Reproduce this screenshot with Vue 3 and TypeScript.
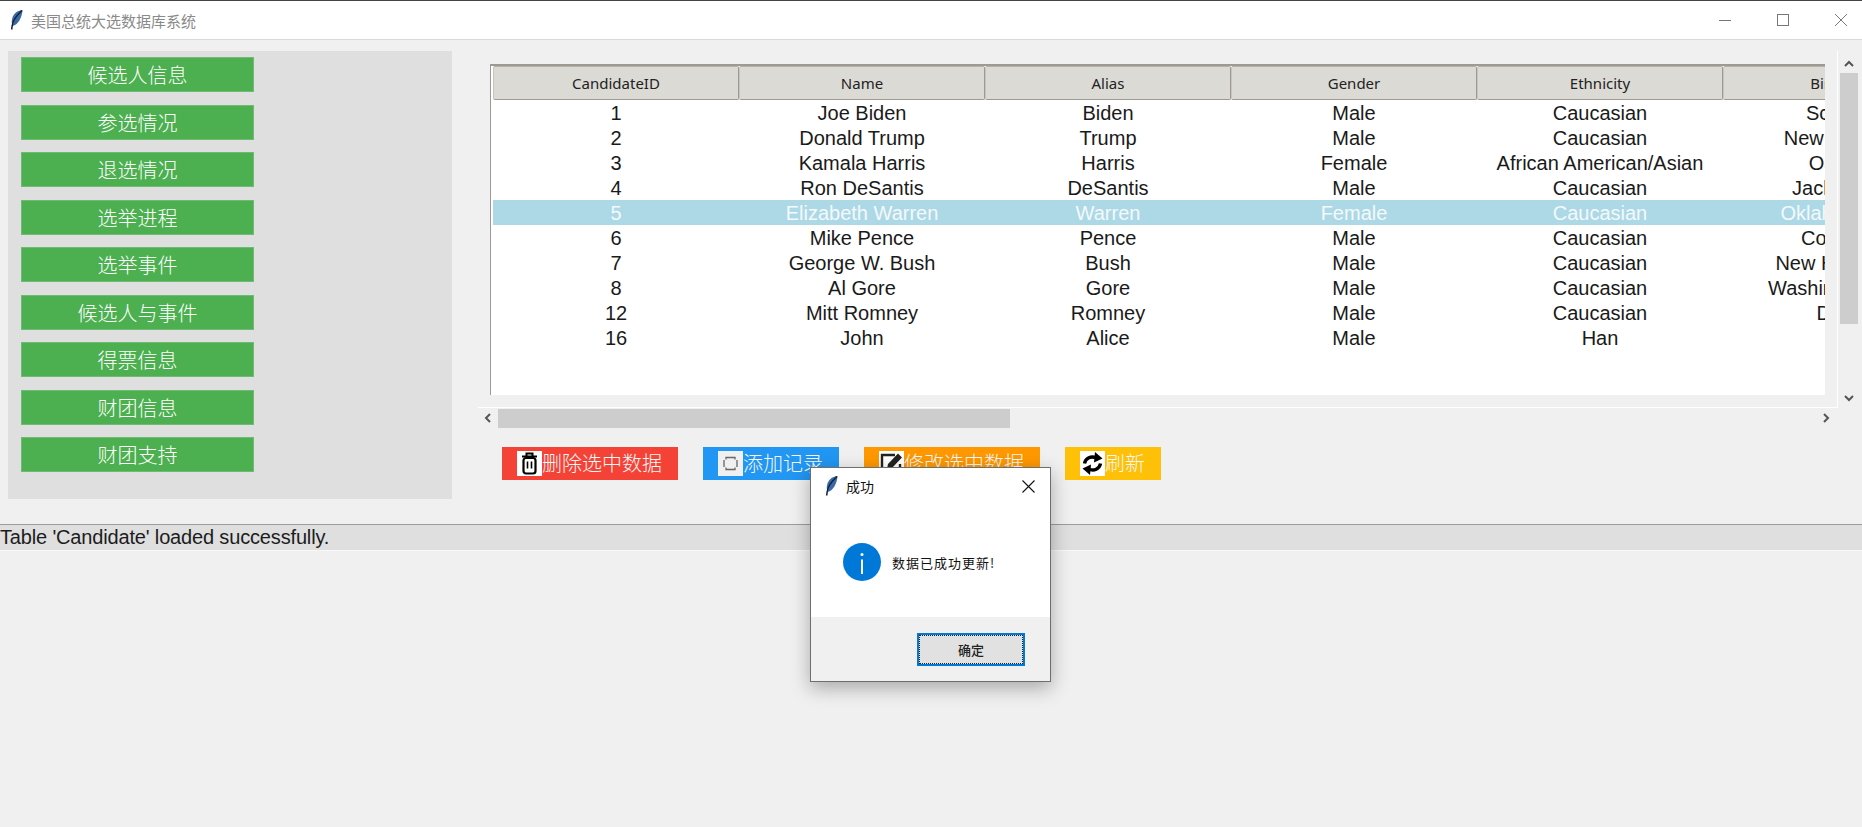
<template>
  <div class="window">
    <div class="titlebar">
      <svg class="feather" width="15" height="22" viewBox="0 0 15 22">
        <path d="M13.500 1C8 1.500 3.500 5 2.800 11.500c-.2 2 .2 4 .9 5.500 5-1 9.300-8 9.800-16z" fill="#3a6aa6" />
        <path d="M13 1.500C8 6 3.500 11 3.200 17l-.6 3.500" fill="none" stroke="#142338" stroke-width="1.500" />
      </svg>
      <span class="app-title">美国总统大选数据库系统</span>
      <div class="win-controls">
        <svg width="12" height="12" viewBox="0 0 12 12"><path d="M0 6.500h12" stroke="#777" /></svg>
        <svg width="12" height="12" viewBox="0 0 12 12"><rect x=".5" y=".5" width="11" height="11" fill="none" stroke="#777" /></svg>
        <svg width="12" height="12" viewBox="0 0 12 12"><path d="M0 0l12 12M12 0L0 12" stroke="#777" /></svg>
      </div>
    </div>

    <div class="main">
      <div class="side">
        <button v-for="item in menu" :key="item" class="side-btn">{{ item }}</button>
      </div>

      <div class="content">
        <div class="table-row">
          <div class="frame">
            <div class="tree">
              <div class="tree-head">
                <div v-for="c in columns" :key="c" class="head-cell">{{ c }}</div>
              </div>
              <div
                v-for="row in rows"
                :key="row[0]"
                :class="['tree-row', { selected: row[0] === '5' }]"
              >
                <div v-for="(val, i) in row" :key="i" class="cell">{{ val }}</div>
              </div>
            </div>
          </div>
          <div class="vscroll">
            <svg class="arrow" width="10" height="7" viewBox="0 0 10 7"><path d="M1 6l4-4 4 4" fill="none" stroke="#555" stroke-width="2" /></svg>
            <div class="vthumb"></div>
            <svg class="arrow" width="10" height="7" viewBox="0 0 10 7"><path d="M1 1l4 4 4-4" fill="none" stroke="#555" stroke-width="2" /></svg>
          </div>
        </div>

        <div class="hscroll">
          <svg width="7" height="10" viewBox="0 0 7 10"><path d="M6 1L2 5l4 4" fill="none" stroke="#555" stroke-width="2" /></svg>
          <div class="hthumb"></div>
          <svg class="arrow-right" width="7" height="10" viewBox="0 0 7 10"><path d="M1 1l4 4-4 4" fill="none" stroke="#555" stroke-width="2" /></svg>
        </div>

        <div class="actions">
          <button v-for="a in actions" :key="a.label" class="action-btn" :style="{ background: a.color }">
            <span :class="['icon-box', a.icon]">
              <svg v-if="a.icon === 'trash'" width="25" height="25" viewBox="0 0 25 25">
                <path d="M5 5.500h15M9.500 5V2.500h6V5" fill="none" stroke="#000" stroke-width="2" />
                <rect x="6.500" y="7" width="12" height="15.500" rx="2.500" fill="none" stroke="#000" stroke-width="2.200" />
                <path d="M10.500 10.500v7M14.500 10.500v7" stroke="#000" stroke-width="1.600" />
              </svg>
              <svg v-else-if="a.icon === 'add'" width="25" height="25" viewBox="0 0 25 25">
                <path d="M8 8.500V6.500h9v2M8 16.500v2h9v-2M6 9v7M19 9v7" fill="none" stroke="#666" stroke-width="1.300" />
              </svg>
              <svg v-else-if="a.icon === 'edit'" width="25" height="25" viewBox="0 0 25 25">
                <path d="M16 4H3v18h18v-9" fill="none" stroke="#222" stroke-width="2.400" />
                <path d="M9 13L19 2.500l4 4L13 17l-5 1z" fill="#222" />
              </svg>
              <svg v-else width="25" height="25" viewBox="0 0 25 25">
                <path d="M4.500 12.500C5.500 7 11 4.500 16.500 7" fill="none" stroke="#000" stroke-width="3.400" />
                <path d="M15 1l7.500 6.500-8.500 4z" fill="#000" />
                <path d="M20.500 12.500C19.500 18 14 20.500 8.500 18" fill="none" stroke="#000" stroke-width="3.400" />
                <path d="M10 24l-7.500-6.500 8.500-4z" fill="#000" />
              </svg>
            </span>
            <span class="action-label">{{ a.label }}</span>
          </button>
        </div>
      </div>
    </div>

    <div class="status">Table 'Candidate' loaded successfully.</div>

    <div class="dialog">
      <div class="dialog-title">
        <svg class="feather" width="15" height="22" viewBox="0 0 15 22">
          <path d="M13.500 1C8 1.500 3.500 5 2.800 11.500c-.2 2 .2 4 .9 5.500 5-1 9.300-8 9.800-16z" fill="#3a6aa6" />
          <path d="M13 1.500C8 6 3.500 11 3.200 17l-.6 3.500" fill="none" stroke="#142338" stroke-width="1.500" />
        </svg>
        <span class="dialog-name">成功</span>
        <svg class="dialog-close" width="13" height="13" viewBox="0 0 13 13"><path d="M.5.5l12 12M12.500.5l-12 12" stroke="#111" stroke-width="1.100" /></svg>
      </div>
      <div class="dialog-body">
        <svg width="38" height="38" viewBox="0 0 38 38">
          <circle cx="19" cy="19" r="19" fill="#0078d7" />
          <path d="M19 16.500V31" stroke="#fff" stroke-width="2" />
          <circle cx="19" cy="11.500" r="1.500" fill="#fff" />
        </svg>
        <span class="dialog-msg">数据已成功更新!</span>
      </div>
      <div class="dialog-foot">
        <button class="ok-btn"><span>确定</span></button>
      </div>
    </div>
  </div>
</template>

<script setup lang="ts">
interface ActionItem {
  label: string
  color: string
  icon: 'trash' | 'add' | 'edit' | 'refresh'
}

const menu: string[] = [
  '候选人信息',
  '参选情况',
  '退选情况',
  '选举进程',
  '选举事件',
  '候选人与事件',
  '得票信息',
  '财团信息',
  '财团支持',
]

const columns: string[] = ['CandidateID', 'Name', 'Alias', 'Gender', 'Ethnicity', 'Birthplace']

const rows: string[][] = [
  ['1', 'Joe Biden', 'Biden', 'Male', 'Caucasian', 'Scranton'],
  ['2', 'Donald Trump', 'Trump', 'Male', 'Caucasian', 'New York City'],
  ['3', 'Kamala Harris', 'Harris', 'Female', 'African American/Asian', 'Oakland'],
  ['4', 'Ron DeSantis', 'DeSantis', 'Male', 'Caucasian', 'Jacksonville'],
  ['5', 'Elizabeth Warren', 'Warren', 'Female', 'Caucasian', 'Oklahoma City'],
  ['6', 'Mike Pence', 'Pence', 'Male', 'Caucasian', 'Columbus'],
  ['7', 'George W. Bush', 'Bush', 'Male', 'Caucasian', 'New Haven, CT'],
  ['8', 'Al Gore', 'Gore', 'Male', 'Caucasian', 'Washington, D.C.'],
  ['12', 'Mitt Romney', 'Romney', 'Male', 'Caucasian', 'Detroit'],
  ['16', 'John', 'Alice', 'Male', 'Han', ''],
]

const actions: ActionItem[] = [
  { label: '删除选中数据', color: '#f44336', icon: 'trash' },
  { label: '添加记录', color: '#2196f3', icon: 'add' },
  { label: '修改选中数据', color: '#ff9800', icon: 'edit' },
  { label: '刷新', color: '#ffc107', icon: 'refresh' },
]
</script>

<style>
html,
body {
  background: #f0f0f0;
  overflow: hidden;
}
</style>

<style scoped>
.window {
  position: relative;
  width: 1862px;
  height: 827px;
  background: #f0f0f0;
  font-family: "Liberation Sans", "Noto Sans CJK SC", sans-serif;
  overflow: hidden;
}

.titlebar {
  display: flex;
  align-items: center;
  height: 40px;
  box-sizing: border-box;
  border-top: 1px solid #444;
  border-bottom: 1px solid #d9d9d9;
  background: #fff;
  padding-left: 9px;
}

.app-title {
  margin-left: 7px;
  font-size: 15px;
  color: #8a8a8a;
  font-family: "Noto Sans CJK SC", sans-serif;
}

.win-controls {
  margin-left: auto;
  display: flex;
  gap: 46px;
  padding-right: 15px;
}

.main {
  display: flex;
  height: 484px;
  box-sizing: border-box;
  padding: 11px 0 0 8px;
  gap: 26px;
}

.side {
  display: flex;
  flex-direction: column;
  gap: 12.5px;
  width: 444px;
  height: 448px;
  box-sizing: border-box;
  padding: 6px 13px;
  background: #dfdfdf;
}

.side-btn {
  width: 233px;
  height: 35px;
  flex: none;
  padding: 0;
  border: 1px solid #6fbb72;
  background: #4caf50;
  color: #fff;
  font-size: 20px;
  font-family: "Noto Sans CJK SC", sans-serif;
  font-weight: 300;
}

.content {
  display: flex;
  flex-direction: column;
}

.table-row {
  display: flex;
}

.frame {
  width: 1360px;
  height: 357px;
  box-sizing: border-box;
  padding: 13px 12px 12px 12px;
  border-right: 1px solid #fff;
  border-bottom: 1px solid #fff;
}

.tree {
  height: 100%;
  background: #fff;
  border-left: 1px solid #9e9a91;
  border-top: 2px solid #9e9a91;
  overflow: hidden;
  padding: 0 0 0 2px;
  box-sizing: border-box;
}

.tree-head,
.tree-row {
  display: grid;
  grid-template-columns: repeat(6, 246px);
  width: 1476px;
}

.tree-head {
  height: 34px;
}

.head-cell {
  display: flex;
  align-items: center;
  justify-content: center;
  box-sizing: border-box;
  background: #dcdad5;
  border: 1px solid #9e9a91;
  border-top-color: #b5b2ab;
  border-left-color: #c8c5bf;
  border-radius: 2px;
  font-family: "Noto Sans", sans-serif;
  font-size: 15px;
  color: #222;
}

.tree-row {
  height: 25px;
  line-height: 27px;
  font-size: 20px;
  color: #1a1a1a;
}

.tree-row.selected {
  background: #add8e6;
  color: #f4f9fb;
}

.cell {
  display: flex;
  justify-content: center;
  white-space: nowrap;
}

.vscroll {
  display: flex;
  flex-direction: column;
  align-items: center;
  width: 21px;
  height: 357px;
  padding-top: 9px;
  box-sizing: border-box;
}

.vthumb {
  flex: none;
  width: 18px;
  height: 251px;
  margin: 6px 0 71px;
  background: #cdcdcd;
}

.hscroll {
  display: flex;
  align-items: center;
  width: 1360px;
  height: 20px;
  padding-left: 6px;
  box-sizing: border-box;
}

.hthumb {
  width: 512px;
  height: 19px;
  margin-left: 7px;
  background: #cdcdcd;
}

.arrow-right {
  margin-left: 813px;
}

.actions {
  display: flex;
  gap: 25px;
  margin-top: 19px;
  padding-left: 24px;
}

.action-btn {
  display: flex;
  align-items: center;
  height: 33px;
  padding: 0 16px 0 15px;
  border: none;
  color: #f7f7f7;
  font-size: 20px;
  font-family: "Noto Sans CJK SC", sans-serif;
  font-weight: 300;
}

.action-label {
  margin-top: -2px;
}

.icon-box {
  display: block;
  width: 25px;
  height: 25px;
  background: #fff;
}

.icon-box.add {
  background: #f0f0f0;
}

.status {
  height: 27px;
  box-sizing: border-box;
  border-top: 1px solid #9c9c9c;
  border-bottom: 1px solid #f8f8f8;
  background: #dfdfdf;
  font-size: 20px;
  line-height: 24px;
  letter-spacing: -0.16px;
  color: #1c1c1c;
  white-space: nowrap;
}

.dialog {
  position: absolute;
  left: 810px;
  top: 467px;
  width: 241px;
  height: 215px;
  box-sizing: border-box;
  display: flex;
  flex-direction: column;
  background: #fff;
  border: 1px solid #6e6e6e;
  box-shadow: 0 6px 18px rgba(0, 0, 0, 0.3);
}

.dialog-title {
  display: flex;
  align-items: center;
  height: 36px;
  padding: 0 15px 0 13px;
  flex: none;
}

.dialog-name {
  margin-left: 7px;
  font-size: 14px;
  color: #111;
  font-family: "Noto Sans CJK SC", sans-serif;
}

.dialog-close {
  margin-left: auto;
}

.dialog-body {
  display: flex;
  align-items: center;
  flex: 1;
  padding: 3px 0 0 32px;
  gap: 11px;
}

.dialog-msg {
  font-size: 13px;
  color: #111;
  font-family: "Noto Sans CJK SC", sans-serif;
  letter-spacing: 1px;
}

.dialog-foot {
  display: flex;
  justify-content: flex-end;
  align-items: center;
  flex: none;
  height: 64px;
  padding-right: 25px;
  background: #f0f0f0;
}

.ok-btn {
  width: 108px;
  height: 33px;
  padding: 0;
  border: 2px solid #0078d7;
  background: #e1e1e1;
  font-family: "Noto Sans CJK SC", sans-serif;
  font-size: 13px;
  font-weight: 500;
  color: #222;
}

.ok-btn span {
  display: flex;
  align-items: center;
  justify-content: center;
  height: 100%;
  box-sizing: border-box;
  border: 1px dotted #222;
}
</style>
